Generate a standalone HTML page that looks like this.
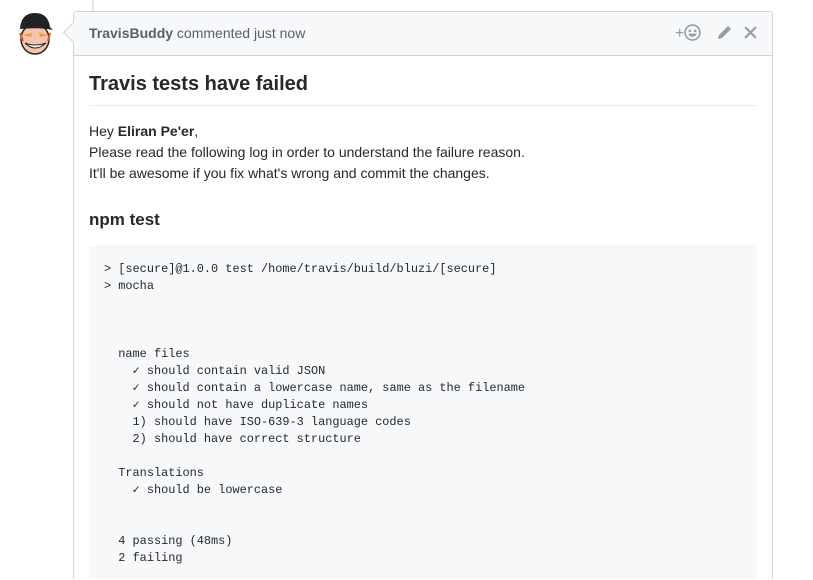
<!DOCTYPE html>
<html style="height:580px;overflow:hidden"><head><style>
body{margin:0;width:813px;height:580px;overflow:hidden;background:#fff;font-family:"Liberation Sans",sans-serif;color:#24292e;position:relative}
.tl{position:absolute;left:92px;top:0;width:2px;height:11px;background:#e1e4e8}
.box{position:absolute;left:73px;top:11px;width:698px;height:567px;overflow:hidden;border:1px solid #d1d5da;border-bottom:none;border-radius:3px 3px 0 0}
.hd{height:43px;background:#f6f8fa;border-bottom:1px solid #d1d5da;font-size:14px;color:#586069;line-height:42px;padding-left:15px;border-radius:3px 3px 0 0}
.hd b{color:#586069}
.arrow{position:absolute;left:-8px;top:13px;width:14px;height:14px;background:#f6f8fa;border-left:1px solid #d1d5da;border-bottom:1px solid #d1d5da;transform:rotate(45deg)}
.bd{padding:0 15px}
h1{font-size:20px;margin:16px 0 0;padding-bottom:8px;border-bottom:1px solid #eaecef;line-height:25px}
p{font-size:14px;line-height:21px;margin:15px 0 0}
h3{font-size:17px;margin:25px 0 0;line-height:22px}
pre{background:#f6f8fa;margin:14px 0 0;padding:16px 15px 0;font-family:"Liberation Mono",monospace;font-size:11.9px;line-height:17px;border-radius:3px;height:340px}
.ic{position:absolute;top:12px;color:#959da5;font-size:16px}
</style></head><body>
<div class="tl"></div>
<svg style="position:absolute;left:15px;top:11px" width="42" height="44" viewBox="0 0 42 44">
<ellipse cx="20" cy="28" rx="14" ry="15" fill="#f6c3b0" stroke="#222" stroke-width="1.5"/>
<path d="M5 18 Q6 2 20 2 Q33 2 35 16 L38 19 Q25 16 5 18Z" fill="#222"/>
<path d="M8 24 L17 22 L16 26Z M24 22 L33 24 L25 26Z" fill="#e8a020"/>
<path d="M10 32 Q20 42 31 32 Q20 36 10 32Z" fill="#fff" stroke="#222"/>
<path d="M5 22 L8 30 M35 22 L33 30" stroke="#d06020" stroke-width="2"/>
</svg>
<div class="arrow" style="left:66px;top:25px;z-index:2"></div>
<div class="box">
<div class="hd"><b>TravisBuddy</b> commented just now</div>
<span class="ic" style="left:601px">+<svg width="17" height="17" viewBox="0 0 16 16" style="vertical-align:-3px"><circle cx="8" cy="8" r="7" fill="none" stroke="#959da5" stroke-width="1.5"/><circle cx="5.5" cy="6.5" r="1.2" fill="#959da5"/><circle cx="10.5" cy="6.5" r="1.2" fill="#959da5"/><path d="M4 9h8q-1 3-4 3t-4-3z" fill="#959da5"/></svg></span>
<svg class="ic" style="left:642px;top:13px" width="16" height="16" viewBox="0 0 16 16"><path d="M12 1l3 3-9 9-4 1 1-4z" fill="#959da5"/></svg>
<svg class="ic" style="left:670px;top:14px" width="13" height="13" viewBox="0 0 12 12"><path d="M1 1l10 10M11 1L1 11" stroke="#959da5" stroke-width="2"/></svg>
<div class="bd">
<h1>Travis tests have failed</h1>
<p>Hey <b>Eliran Pe'er</b>,<br>Please read the following log in order to understand the failure reason.<br>It'll be awesome if you fix what's wrong and commit the changes.</p>
<h3>npm test</h3>
<pre>&gt; [secure]@1.0.0 test /home/travis/build/bluzi/[secure]
&gt; mocha



  name files
    ✓ should contain valid JSON
    ✓ should contain a lowercase name, same as the filename
    ✓ should not have duplicate names
    1) should have ISO-639-3 language codes
    2) should have correct structure

  Translations
    ✓ should be lowercase


  4 passing (48ms)
  2 failing</pre>
</div></div>
</body></html>
